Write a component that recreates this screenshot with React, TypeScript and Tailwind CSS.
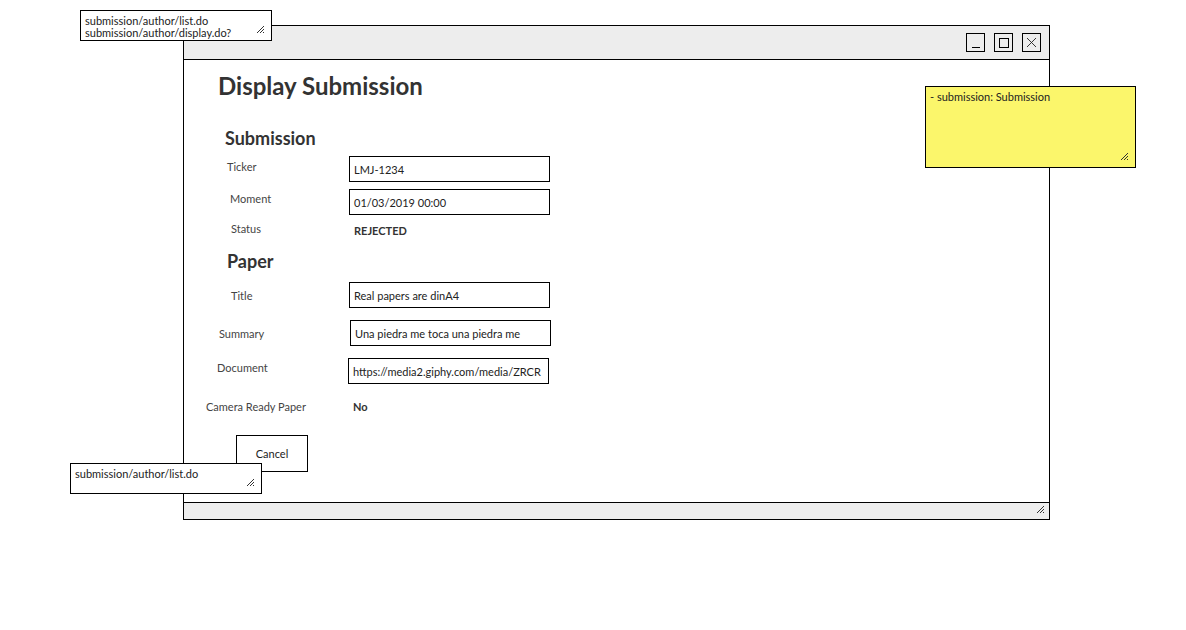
import React from "react";

const Grip = ({ className = "" }: { className?: string }) => (
  <svg width="9" height="9" viewBox="0 0 9 9" className={className}>
    <path d="M1 8 L8 1 M4 8 L8 4 M7 8 L8 7" stroke="#333" strokeWidth="1" fill="none" />
  </svg>
);

const Note = ({ lines, className }: { lines: string[]; className: string }) => (
  <div className={`absolute border border-black px-[4px] pt-[4px] text-[11px] leading-[12px] text-[#222] ${className}`}>
    {lines.map((l) => (
      <div key={l}>{l}</div>
    ))}
    <Grip className="absolute right-[6px] bottom-[6px]" />
  </div>
);

type RowProps = { label: string; pl: string; lw: string; lmt: string; children: React.ReactNode; mt: string };

const Row = ({ label, pl, lw, lmt, children, mt }: RowProps) => (
  <div className={`flex items-start ${mt}`}>
    <div className={`shrink-0 text-[11px] leading-[14px] text-[#444] ${pl} ${lw} ${lmt}`}>{label}</div>
    {children}
  </div>
);

const Field = ({ value }: { value: string }) => (
  <div className="h-[26px] w-[201px] overflow-hidden whitespace-nowrap border border-black pl-[4px] text-[11px] leading-[25px] text-[#222]">
    {value}
  </div>
);

const App = () => {
  return (
    <div className="relative h-[630px] w-[1186px] overflow-hidden bg-white" style={{ fontFamily: "Lato, 'Liberation Sans', sans-serif" }}>
      <div className="ml-[183px] mt-[25px] flex h-[495px] w-[867px] flex-col border border-black">
        {/* title bar */}
        <div className="flex h-[34px] shrink-0 items-start justify-end gap-[9px] border-b border-black bg-[#ededed] pr-[8px] pt-[7px]">
          <div className="relative h-[19px] w-[19px] border border-black">
            <div className="absolute bottom-[3px] left-[5px] h-px w-[8px] bg-black" />
          </div>
          <div className="flex h-[19px] w-[19px] items-center justify-center border border-black">
            <div className="h-[10px] w-[10px] border border-black" />
          </div>
          <div className="flex h-[19px] w-[19px] items-center justify-center border border-black">
            <svg width="11" height="11" viewBox="0 0 11 11">
              <path d="M1 1 L10 10 M10 1 L1 10" stroke="#222" strokeWidth="0.9" />
            </svg>
          </div>
        </div>

        {/* body */}
        <div className="flex flex-1 flex-col text-[#333]">
          <h1 className="mt-[11px] pl-[34px] text-[24px] font-bold leading-[30px]">Display Submission</h1>
          <h2 className="mt-[25px] pl-[41px] text-[18px] font-bold leading-[24px]">Submission</h2>

          <Row label="Ticker" pl="pl-[43px]" lw="w-[165px]" lmt="mt-[4px]" mt="mt-[6px]">
            <Field value="LMJ-1234" />
          </Row>
          <Row label="Moment" pl="pl-[46px]" lw="w-[165px]" lmt="mt-[3px]" mt="mt-[7px]">
            <Field value="01/03/2019 00:00" />
          </Row>
          <Row label="Status" pl="pl-[47px]" lw="w-[165px]" lmt="mt-[1px]" mt="mt-[6px]">
            <div className="mt-[3px] pl-[5px] text-[11px] font-bold leading-[14px] text-[#333]">REJECTED</div>
          </Row>

          <h2 className="mt-[11px] pl-[43px] text-[18px] font-bold leading-[24px]">Paper</h2>

          <Row label="Title" pl="pl-[47px]" lw="w-[165px]" lmt="mt-[7px]" mt="mt-[9px]">
            <Field value="Real papers are dinA4" />
          </Row>
          <Row label="Summary" pl="pl-[35px]" lw="w-[166px]" lmt="mt-[7px]" mt="mt-[12px]">
            <Field value="Una piedra me toca una piedra me" />
          </Row>
          <Row label="Document" pl="pl-[33px]" lw="w-[164px]" lmt="mt-[3px]" mt="mt-[12px]">
            <Field value="https://media2.giphy.com/media/ZRCR" />
          </Row>
          <Row label="Camera Ready Paper" pl="pl-[22px]" lw="w-[165px]" lmt="mt-[1px]" mt="mt-[15px]">
            <div className="mt-[1px] pl-[4px] text-[11px] font-bold leading-[14px] text-[#333]">No</div>
          </Row>

          <div className="ml-[52px] mt-[21px] flex h-[37px] w-[72px] items-center justify-center border border-black pt-[1px] text-[11px] text-[#222]">
            Cancel
          </div>
        </div>

        {/* status bar */}
        <div className="relative h-[17px] shrink-0 border-t border-black bg-[#ededed]">
          <Grip className="absolute right-[4px] top-[2px]" />
        </div>
      </div>

      <Note
        lines={["submission/author/list.do", "submission/author/display.do?"]}
        className="left-[80px] top-[10px] h-[31px] w-[192px] bg-white"
      />
      <Note lines={["submission/author/list.do"]} className="left-[70px] top-[463px] h-[31px] w-[192px] bg-white" />
      <Note lines={["- submission: Submission"]} className="left-[925px] top-[86px] h-[82px] w-[211px] bg-[#fbf66b]" />
    </div>
  );
};

export default App;
